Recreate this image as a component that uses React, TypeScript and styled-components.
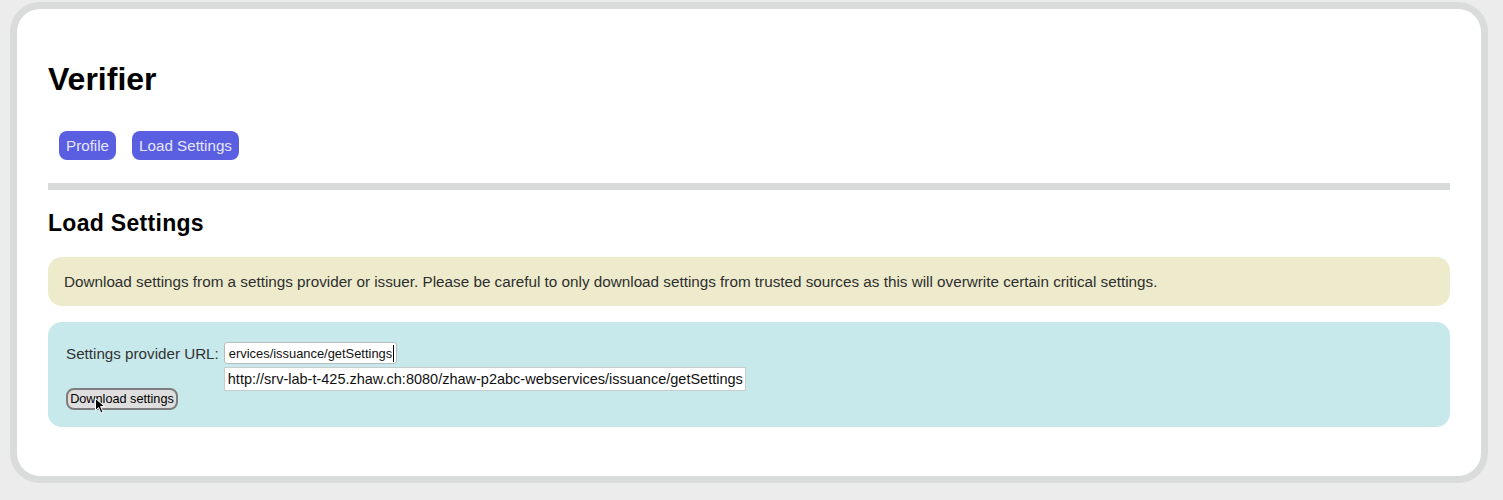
import React from "react";
import styled, { createGlobalStyle } from "styled-components";

const Global = createGlobalStyle`
  html, body { margin: 0; padding: 0; background: #ececec; }
  body { font-family: "Liberation Sans", Arial, sans-serif; }
`;

const Page = styled.div`
  padding: 2px 15px 17px 10px;
`;

const Card = styled.div`
  background: #ffffff;
  border: 7px solid #dadbdb;
  border-radius: 30px;
  padding: 0 31px 49px;
`;

const Title = styled.h1`
  margin: 52px 0 0;
  font-size: 32px;
  line-height: 37px;
  font-weight: bold;
  color: #000;
`;

const Nav = styled.nav`
  display: flex;
  gap: 16px;
  margin: 33px 0 0 11px;
`;

const NavButton = styled.a`
  display: flex;
  align-items: center;
  height: 29px;
  padding: 0 7px;
  box-sizing: border-box;
  background: #5a5ee0;
  color: #e6e7ff;
  border-radius: 8px;
  font-size: 15.2px;
  text-decoration: none;
`;

const Separator = styled.hr`
  margin: 23px 0 0;
  height: 7px;
  border: none;
  background: #d9dbda;
`;

const SectionTitle = styled.h2`
  margin: 20px 0 0;
  font-size: 23px;
  letter-spacing: 0.3px;
  line-height: 26px;
  font-weight: bold;
  color: #000;
`;

const Notice = styled.div`
  margin-top: 21px;
  background: #edebcc;
  border-radius: 14px;
  padding: 16px 16px;
  font-size: 15.25px;
  line-height: 17px;
  color: #2e2e2e;
`;

const FormBox = styled.div`
  margin-top: 16px;
  background: #c7e9ec;
  border-radius: 14px;
  padding: 20px 18px 17px;
  display: flex;
  flex-direction: column;
  align-items: flex-start;
  gap: 24px;
`;

const Row = styled.div`
  display: flex;
  align-items: center;
  gap: 5px;
`;

const Label = styled.label`
  font-size: 15.2px;
  color: #333;
`;

const FieldWrap = styled.div`
  position: relative;
`;

const Field = styled.div`
  width: 173px;
  height: 22px;
  box-sizing: border-box;
  background: #fff;
  border: 1px solid #b9bcbc;
  border-radius: 3px;
  padding: 0 1px 0 4px;
  display: flex;
  align-items: center;
  font-size: 12.9px;
  color: #111;
  white-space: nowrap;
  overflow: hidden;
`;

const Caret = styled.span`
  display: inline-block;
  flex: none;
  width: 1px;
  height: 17px;
  background: #000;
  margin-left: 1px;
`;

const Suggestion = styled.div`
  position: absolute;
  left: 0;
  top: 25px;
  width: 522px;
  height: 24px;
  box-sizing: border-box;
  background: #fff;
  border: 1px solid #c9cccc;
  padding: 0 3px;
  display: flex;
  align-items: center;
  font-size: 14.5px;
  color: #111;
  white-space: nowrap;
  z-index: 2;
`;

const ButtonWrap = styled.div`
  position: relative;
`;

const Button = styled.button`
  height: 22px;
  box-sizing: border-box;
  padding: 0 3px;
  background: #dedede;
  border: 2px solid #7d7d7d;
  border-radius: 8px;
  font-family: "Liberation Sans", Arial, sans-serif;
  font-size: 12.7px;
  color: #000;
  display: flex;
  align-items: center;
  justify-content: center;
  white-space: nowrap;
  width: 112px;
`;

const Cursor = styled.svg`
  position: absolute;
  left: 29px;
  top: 10px;
  pointer-events: none;
`;

export default function App() {
  return (
    <>
      <Global />
      <Page>
        <Card>
          <Title>Verifier</Title>
          <Nav>
            <NavButton href="#">Profile</NavButton>
            <NavButton href="#">Load Settings</NavButton>
          </Nav>
          <Separator />
          <SectionTitle>Load Settings</SectionTitle>
          <Notice>
            Download settings from a settings provider or issuer. Please be careful to only download settings from
            trusted sources as this will overwrite certain critical settings.
          </Notice>
          <FormBox>
            <Row>
              <Label>Settings provider URL:</Label>
              <FieldWrap>
                <Field>
                  ervices/issuance/getSettings
                  <Caret />
                </Field>
                <Suggestion>http://srv-lab-t-425.zhaw.ch:8080/zhaw-p2abc-webservices/issuance/getSettings</Suggestion>
              </FieldWrap>
            </Row>
            <ButtonWrap>
              <Button>Download settings</Button>
              <Cursor width="11" height="16" viewBox="0 0 11 16">
                <path d="M0.5 0.5 L0.5 12.5 L3.5 9.5 L6 15 L8 14 L5.6 8.6 L9.8 8.6 Z" fill="#000" stroke="#fff" strokeWidth="1" />
              </Cursor>
            </ButtonWrap>
          </FormBox>
        </Card>
      </Page>
    </>
  );
}
